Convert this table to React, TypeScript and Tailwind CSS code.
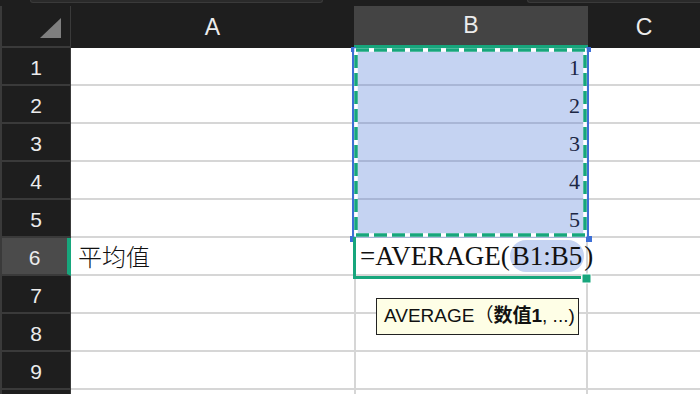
const rows = [1, 2, 3, 4, 5, 6, 7, 8, 9, 10];

function RowHeader({ n, active }: { n: number; active?: boolean }) {
  return (
    <div
      className={
        "flex h-[38px] items-center justify-center border-b-2 border-l-2 border-[#3a3a3a] pt-[4px] text-[21px] text-[#ececec] " +
        (active ? "border-r-4 border-r-[#17a67c] bg-[#4b4b4b]" : "border-r border-r-[#3a3a3a] bg-[#1e1e1e]")
      }
    >
      {n < 10 ? n : null}
    </div>
  );
}

function BodyRow({ n }: { n: number }) {
  const selected = n <= 5;
  return (
    <>
      <RowHeader n={n} active={n === 6} />
      <div className="flex h-[38px] items-center border-b-2 border-[#d6d6d6] bg-white pl-[7px] text-[24px] text-[#111]">
        {n === 6 && <span className="font-['Noto_Sans_CJK_SC',serif] font-light">平均值</span>}
      </div>
      <div
        className={
          "flex h-[38px] items-center border-x-2 border-b-2 " +
          (selected ? "justify-end border-b-[#a9b6d6] border-x-[#d6d6d6] bg-[#c5d3f2] pr-[6px] pt-[3px]" : "border-[#d6d6d6] bg-white")
        }
      >
        {selected && <span className="font-['Liberation_Serif',serif] text-[22px] text-[#1c2744]">{n}</span>}
        {n === 6 && (
          <span className="relative z-10 whitespace-nowrap pl-[4px] font-['Liberation_Serif',serif] text-[27px] text-[#111]">
            =AVERAGE(<span className="rounded-full bg-[#c5d3f2] px-[2px] py-[1px]">B1:B5</span>)
          </span>
        )}
      </div>
      <div className="h-[38px] border-b-2 border-[#d6d6d6] bg-white" />
    </>
  );
}

export default function App() {
  return (
    <div className="relative h-[394px] w-[700px] overflow-hidden bg-[#1e1e1e] font-['Liberation_Sans','Noto_Sans_CJK_SC',sans-serif]">
      {/* bottom edge of the formula bar */}
      <div className="flex h-[6px] items-start">
        <div className="ml-[30px] h-[3px] w-[293px] rounded-b-md border-x border-b border-[#3a3a3a] bg-[#2a2a2a]" />
        <div className="ml-[204px] h-[3px] flex-1 rounded-bl-md border-b border-l border-[#3a3a3a] bg-[#2a2a2a]" />
      </div>

      {/* column headers */}
      <div className="grid h-[42px] grid-cols-[71px_283px_234px_1fr] text-[23px] text-[#ececec]">
        <div className="relative border-b-2 border-l-2 border-r border-[#3a3a3a]">
          <svg className="absolute left-[38px] top-[12px]" width="22" height="21" viewBox="0 0 22 21">
            <polygon points="0,20 21,20 21,0" fill="#7f7f7f" />
          </svg>
        </div>
        <div className="flex items-center justify-center">A</div>
        <div className="flex items-center justify-center border-b-[3px] border-[#17a67c] bg-[#444]">B</div>
        <div className="flex items-center justify-center">C</div>
      </div>

      {/* cells */}
      <div className="grid grid-cols-[71px_283px_234px_1fr]">
        {rows.map((n) => (
          <BodyRow key={n} n={n} />
        ))}
      </div>

      {/* selection range, copy marquee and active cell */}
      <svg className="pointer-events-none absolute left-[340px] top-[40px]" width="260" height="250" viewBox="340 40 260 250">
        <rect x="352" y="48" width="2" height="190" fill="#3d6fd6" />
        <rect x="587" y="48" width="2" height="190" fill="#3d6fd6" />
        <rect x="351" y="47" width="5" height="5" fill="#3d6fd6" />
        <rect x="586" y="47" width="5" height="5" fill="#3d6fd6" />
        <rect x="586" y="236" width="6" height="6" fill="#3d6fd6" />
        <rect x="350" y="236" width="6" height="6" fill="#3d6fd6" />
        <rect x="356" y="50" width="229" height="185" fill="none" stroke="#fff" strokeWidth="3.5" />
        <rect x="356" y="50" width="229" height="185" fill="none" stroke="#17a67c" strokeWidth="3.5" strokeDasharray="13 5" />
        <rect x="353" y="237" width="3" height="42" fill="#17a67c" />
        <rect x="353" y="276" width="228" height="3" fill="#17a67c" />
        <rect x="582" y="274" width="9" height="9" fill="#17a67c" stroke="#fff" strokeWidth="1" />
      </svg>

      {/* function hint */}
      <div className="absolute left-[376px] top-[298px] flex h-[37px] w-[203px] items-center border border-[#222] bg-[#fefee6] pl-[7px] text-[19px] text-[#111]">
        AVERAGE（<b className="font-bold">数值1</b>, ...)
      </div>
    </div>
  );
}
